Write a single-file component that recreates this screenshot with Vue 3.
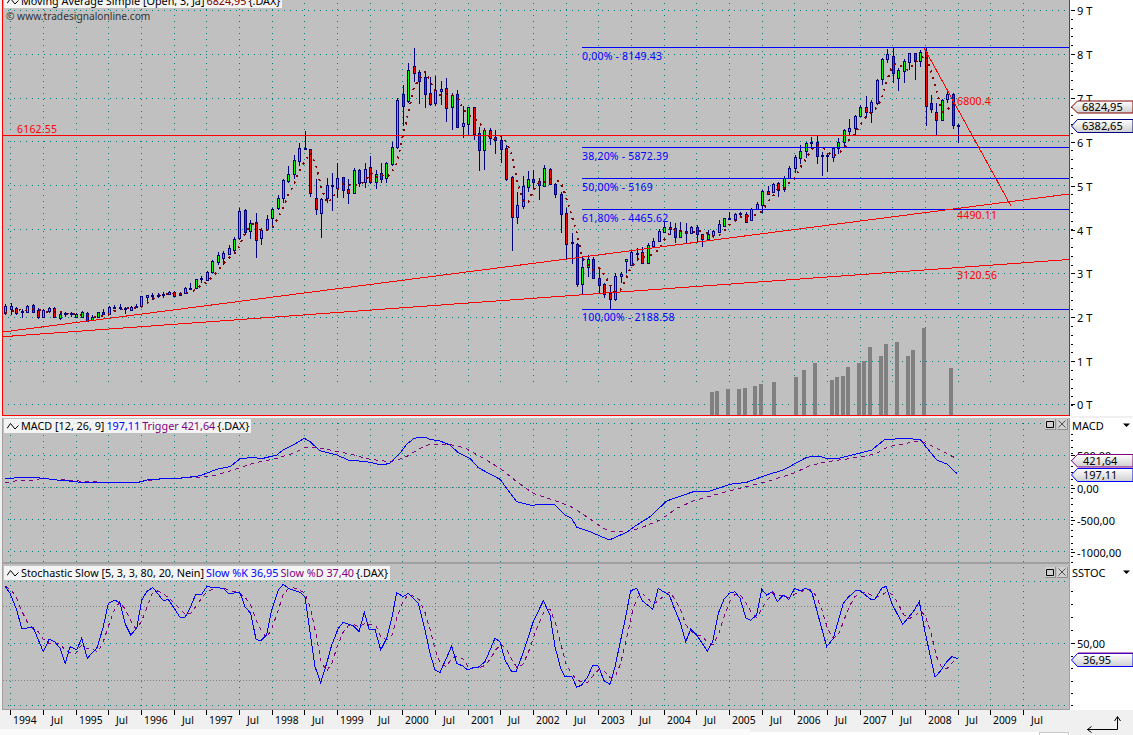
<script setup>
// Candles read as: bodyTop bodyBottom wickTop wickBottom colour (3x crop coordinates)
const early = `558 578 552 585 g|558 568 550 585 g|565 578 562 585 r|573 575 567 593 r|558 575 555 577 g|555 575 552 578 r|571 590 565 598 r|571 590 568 592 g|564 572 560 579 g|565 592 562 595 r|582 593 578 600 g|580 583 575 590 r|580 583 577 592 r|581 590 579 592 g|576 590 573 593 g|578 604 575 606 r|590 601 585 604 g|577 590 576 592 g|577 581 568 584 r|562 581 559 583 g|560 563 555 567 g|560 565 551 570 g|565 567 560 582 r|560 571 558 573 g|557 559 552 562 g|529 557 527 560 g|526 532 524 545 g|524 526 520 540 g|525 527 520 535 r|522 525 517 533 r|517 522 514 524 g|517 527 512 529 r|520 526 516 528 g|505 520 502 523 g|503 505 490 507 g|478 503 476 505 g|475 478 467 490 g|455 481 452 483 g|424 455 420 460 g|405 425 396 435 g|400 415 394 435 g|385 401 375 405 g|358 390 350 395 g|273 355 263 360 g|270 335 267 345 r|308 334 300 357 g|305 361 280 413 r|330 353 325 375 g|298 328 285 330 g|268 293 265 325 g|235 265 226 270 g|181 235 178 248 g|163 184 138 190 g|121 161 105 177 g|85 123 70 137 g|83 85 33 90 g|88 220 88 230 r|235 268 178 285 r|238 280 233 353 g|196 235 175 250 g|196 198 160 272 g|175 203 130 233 g|172 210 170 233 r|208 218 178 252 r|151 220 143 222 g|151 190 148 200 r|148 186 128 203 g|142 185 108 192 r|163 185 150 207 g`
const late = `430 447 400 460 r|400 445 395 458 g|352 402 335 408 g|210 352 205 358 g|193 227 165 288 r|121 213 100 218 g|108 128 55 155 r|127 152 120 222 r|141 191 125 234 r|190 221 142 228 r|180 218 137 227 g|178 184 153 225 g|175 233 145 276 r|195 230 190 300 g|193 290 180 290 r|280 287 228 323 g|232 281 230 315 g|232 312 232 330 r|310 359 290 423 r|300 359 295 420 g|300 325 293 345 r|321 329 300 372 r|331 356 315 400 r|354 446 346 453 r|441 560 437 662 r|526 560 485 582 g|469 527 437 537 g|447 470 422 485 g|448 456 420 475 r|453 465 445 510 r|414 467 405 470 g|418 463 415 465 r|462 493 460 505 r|492 551 487 608 r|550 641 535 690 r|637 640 610 703 g|641 763 640 770 r|712 762 680 795 g|687 712 675 740 g|688 745 680 745 r|745 764 712 790 r|763 792 760 805 r|790 808 765 838 r|739 808 730 812 g|733 737 725 760 g|688 692 688 730 g|665 705 660 708 g|668 671 655 692 g|667 698 650 700 r|645 700 640 703 g|632 648 625 652 g|603 632 598 633 g|591 605 575 607 g|592 598 575 615 r|595 620 580 640 r|600 620 575 622 g|603 610 580 640 r|592 610 587 612 g|590 613 585 635 r|612 628 612 650 r|612 628 600 630 g|604 614 600 625 g|583 605 570 607 g|565 587 563 590 g|563 565 545 570 g|552 567 548 570 g|550 553 545 565 g|553 575 545 580 r|537 571 535 574 g|522 537 515 540 g|483 524 480 550 g|484 491 468 495 r|462 487 460 490 g|460 480 455 500 r|445 478 437 485 g|415 443 407 445 g|380 415 376 430 g|363 383 345 402 g|340 362 335 385 g|335 337 320 357 g|335 377 317 402 r|375 377 365 437 g|375 377 370 425 g|355 380 350 395 g|336 355 325 372 g|300 335 297 350 g|294 302 268 315 g|258 295 255 315 g|232 258 225 262 g|230 245 198 262 r|217 245 210 280 g|150 220 148 225 g|88 148 85 165 g|73 88 57 100 g|78 130 52 158 r|120 143 115 182 g|92 122 88 158 g|70 95 68 120 g|70 92 70 150 r|65 92 60 110 g|66 227 52 287 r|220 238 195 250 r|247 270 220 315 r|211 270 207 273 g|193 208 178 220 g|193 285 190 297 r|285 287 283 338 g`

const barX = (i) => 5.3 + i * 5.445
const parseCandles = (text, offset, first) =>
  text.split('|').map((row, n) => {
    const p = row.split(' ')
    const [top, bot, hi, lo] = p.slice(0, 4).map((v) => Math.round(offset + Number(v) / 3))
    return { x: Math.round(barX(first + n)), top, bot, hi, lo, up: p[4] === 'g' }
  })
const candles = [...parseCandles(early, 120, 0), ...parseCandles(late, 30, 69)]

const maLine = candles
  .map((c, i) => {
    const a = candles.slice(Math.max(0, i - 2), i + 1)
    const v = a.reduce((s, k) => s + (k.up ? k.bot : k.top), 0) / a.length
    return `${c.x},${v.toFixed(1)}`
  })
  .join(' ')

const gridX = Array.from({ length: 32 }, (_, k) => Math.round(10.3 + 32.67 * k) + 0.5)
const timeLabels = gridX.map((x, k) => ({
  x: k % 2 ? x + 7.5 : x + 2.5,
  t: k % 2 ? 'Jul' : String(1994 + k / 2),
}))

const mainRows = [10, 54, 98, 141, 185, 229, 273, 317, 361]
const macdRows = [423, 455, 519, 551]
const stochRows = [581, 643, 705]

const volume = [
  [710, 392], [715, 391], [726, 389], [737, 389], [743, 388], [753, 386], [759, 384], [772, 382],
  [794, 377], [802, 370], [813, 363], [830, 380], [835, 377], [841, 376], [846, 367], [857, 363],
  [862, 361], [868, 347], [879, 356], [884, 344], [895, 342], [906, 356], [911, 350], [922, 328], [949, 368],
]

const levels = [
  { y: 47, x: 582, t: '0,00% - 8149.43', ty: 60 },
  { y: 147, x: 582, t: '38,20% - 5872.39', ty: 160 },
  { y: 178, x: 582, t: '50,00% - 5169', ty: 191 },
  { y: 209, x: 582, t: '61,80% - 4465.62', ty: 222 },
  { y: 309, x: 582, t: '100,00% - 2188.58', ty: 321 },
]
const redLabels = [
  { x: 17, y: 133, t: '6162.55' },
  { x: 957, y: 105, t: '6800.4' },
  { x: 957, y: 219, t: '4490.11' },
  { x: 957, y: 279, t: '3120.56' },
]

const pts = (text, ox, oy) =>
  text.split(' ').map((p) => {
    const [a, b] = p.split(',').map(Number)
    return [ox + a / 3, oy + b / 3]
  })
const toStr = (a) => a.map((p) => `${p[0].toFixed(1)},${p[1].toFixed(1)}`).join(' ')

const macdLine = toStr([
  ...pts('15,207 50,203 100,202 130,205 170,210 200,212 260,219 330,218 415,217 450,208 540,205 600,197 650,178 690,170 720,146 750,143 790,145 830,135 850,120 880,105 913,85 930,95 960,122 1010,135 1045,150 1100,155 1145,165 1170,160 1195,135', 0, 410),
  ...pts('0,85 20,58 40,42 55,37 75,37 90,43 120,48 150,60 175,83 210,100 235,128 270,147 300,163 350,230 395,241 430,238 465,240 495,270 515,280 530,307 570,320 628,345 680,322 700,307 750,275 800,228 880,200 930,198 990,178 1040,172 1100,150 1150,135 1220,97 1255,93 1275,99 1320,99 1380,84', 400, 425),
  ...pts('35,150 75,118 135,116 180,118 230,180 260,192 290,220', 860, 400),
])
const macdTrigger = toStr([
  ...pts('15,218 50,212 100,210 130,205 200,210 260,215 330,217 415,217 500,205 590,203 650,195 700,180 760,160 830,145 880,130 915,113 945,112 1000,122 1050,132 1110,148 1170,155 1195,150', 0, 410),
  ...pts('0,102 30,90 50,75 85,60 105,58 140,58 170,62 200,72 250,100 300,130 350,170 400,205 450,222 510,243 560,275 610,310 640,320 680,320 720,310 780,285 830,250 880,228 950,208 1030,187 1100,170 1180,145 1230,122 1280,110 1340,102 1400,92', 400, 425),
  ...pts('50,160 85,140 140,130 180,122 225,142 290,176', 860, 400),
])

const stochK = [
  ...pts('15,78 30,100 50,150 65,205 100,203 130,275 147,238 165,245 180,265 196,310 210,260 230,270 245,235 262,295 292,262 310,200 325,130 345,120 360,130 375,190 392,225 410,205 425,120 440,95 458,82 490,122 505,118 540,172 555,172 570,145 587,103 605,103 620,80 670,85 685,100 720,98 735,140 752,160 768,238 782,242 800,225 815,150 835,90 850,73 865,85 900,97 915,110 945,320 962,368 980,310 995,255 1015,205 1030,187 1060,197 1077,215 1093,157 1108,210 1125,208 1142,270 1160,235 1175,175 1190,98 1210,110 1225,100 1255,130 1275,210 1290,280 1305,330 1320,338 1355,258 1370,310 1388,318 1403,330 1420,323 1435,322 1455,305 1485,235', 0, 560),
  ...pts('0,245 15,300 35,335 48,335 65,290 100,185 130,122 150,165 165,260 182,325 195,350 215,348 230,382 245,375 262,352 278,317 295,318 312,362 330,373 345,320 360,250 375,180 392,92 410,85 427,122 458,148 475,85 490,95 508,105 525,150 540,185 557,245 572,208 590,225 622,273 638,245 655,160 672,118 688,100 705,95 720,115 738,175 752,181 770,165 785,88 800,105 818,95 832,125 850,105 866,118 884,85 900,92 917,85 935,95 980,260 1000,235 1030,130 1045,112 1065,93 1080,92 1115,120 1125,118 1145,85 1158,79 1175,130 1208,193 1240,155 1258,125 1275,215 1305,352 1322,332 1340,305 1355,290 1373,296', 500, 560),
]
const kAt = (x) => {
  for (let i = 1; i < stochK.length; i++) {
    const [x0, y0] = stochK[i - 1]
    const [x1, y1] = stochK[i]
    if (x <= x1) return y0 + ((y1 - y0) * (x - x0)) / (x1 - x0 || 1)
  }
  return stochK[stochK.length - 1][1]
}
const stochD = []
for (let i = 0; i <= 175; i++) {
  const x = barX(i)
  const a = [0, 1, 2].map((n) => kAt(Math.max(5.3, barX(Math.max(0, i - n)))))
  stochD.push([x, (a[0] + a[1] + a[2]) / 3])
}
const stochKLine = toStr(stochK)
const stochDLine = toStr(stochD)

const tagPoints = (y, h) => `1071.5,${y + h / 2} 1077.5,${y} 1133,${y} 1133,${y + h} 1077.5,${y + h}`

const mainAxis = ['9 T', '8 T', '7 T', '6 T', '5 T', '4 T', '3 T', '2 T', '1 T', '0 T'].map((t, i) => ({
  t,
  y: [10, 54, 98, 142, 186, 230, 273, 317, 361, 404][i],
}))
const mainMinor = Array.from({ length: 46 }, (_, i) => 10 + i * 8.78)
const macdAxis = [
  { t: '500,00', y: 455 },
  { t: '0,00', y: 488 },
  { t: '-500,00', y: 520 },
  { t: '-1000,00', y: 552 },
]
const macdMinor = Array.from({ length: 23 }, (_, i) => 434 + i * 6.4)
const stochMinor = [591, 604, 617, 630, 656, 668, 681, 693, 705]
</script>

<template>
  <div class="app">
    <div class="row main-row">
      <div class="plot plot-main">
        <svg class="chart" width="1066" height="415" viewBox="3 0 1066 415">
          <g class="grid">
            <line v-for="y in mainRows" :key="y" x1="2" x2="1069" :y1="y + 0.5" :y2="y + 0.5" />
            <line v-for="x in gridX" :key="x" :x1="x" :x2="x" y1="3" y2="384" />
            <line x1="2" x2="957" y1="404.5" y2="404.5" stroke-dasharray="1 5 1 5 1 47" />
            <line x1="962" x2="1069" y1="404.5" y2="404.5" />
          </g>
          <rect v-for="v in volume" :key="v[0]" class="vol" :x="v[0]" :y="v[1]" width="4" :height="415 - v[1]" />
          <g v-for="(c, i) in candles" :key="i">
            <line class="wick" :x1="c.x + 0.5" :x2="c.x + 0.5" :y1="c.hi" :y2="c.lo" />
            <rect
              class="body"
              :class="c.up ? 'up' : 'down'"
              :x="c.x - 0.5"
              :y="c.top + 0.5"
              width="2"
              :height="Math.max(1, c.bot - c.top)"
            />
          </g>
          <polyline class="ma" :points="maLine" />
          <line class="red-h" x1="3" x2="1069" y1="135.5" y2="135.5" />
          <line v-for="l in levels" :key="l.y" class="blue-h" :x1="l.x" x2="1069" :y1="l.y + 0.5" :y2="l.y + 0.5" />
          <line class="red-h" x1="3" y1="332" x2="1069" y2="194" />
          <line class="red-h" x1="3" y1="336.7" x2="1069" y2="259.5" />
          <line class="red-fall" x1="924.3" y1="48.3" x2="1010.7" y2="205.5" />
          <text v-for="l in levels" :key="l.t" class="lbl blue" :x="l.x" :y="l.ty">{{ l.t }}</text>
          <text v-for="l in redLabels" :key="l.t" class="lbl red" :x="l.x" :y="l.y">{{ l.t }}</text>
        </svg>
        <div class="title title-main">
          <svg class="wave" width="12" height="8" viewBox="0 0 12 8"><path d="M0 6.5 3.5 1.5 8 7 11.5 3.5" /></svg>
          <span>Moving Average Simple [Open, 3, Ja]</span>
          <span class="c-darkred">6824,95</span>
          <span>{.DAX}</span>
        </div>
        <div class="copyright">© www.tradesignalonline.com</div>
      </div>
      <svg class="axis" width="63" height="416" viewBox="1070 0 63 416">
        <defs>
          <linearGradient id="tagMain" x1="0" x2="0" y1="0" y2="1">
            <stop offset="0" stop-color="#ffffff" />
            <stop offset="1" stop-color="#cfcfcf" />
          </linearGradient>
        </defs>
        <line v-for="y in mainMinor" :key="y" class="tick" x1="1071" x2="1073" :y1="Math.round(y) + 0.5" :y2="Math.round(y) + 0.5" />
        <g v-for="a in mainAxis" :key="a.t">
          <line class="tick" x1="1071" x2="1075" :y1="a.y + 0.5" :y2="a.y + 0.5" />
          <text class="axis-text" x="1077" :y="a.y + 4.5">{{ a.t }}</text>
        </g>
        <polygon :points="tagPoints(101, 12)" fill="url(#tagMain)" stroke="#800000" />
        <text class="axis-text" x="1082" y="111">6824,95</text>
        <polygon :points="tagPoints(119.5, 13)" fill="url(#tagMain)" stroke="#000080" />
        <text class="axis-text" x="1082" y="130">6382,65</text>
      </svg>
    </div>

    <div class="row macd-row">
      <div class="plot plot-sub">
        <svg class="chart" width="1066" height="144" viewBox="3 418 1066 144">
          <g class="grid">
            <line v-for="y in macdRows" :key="y" x1="2" x2="1069" :y1="y + 0.5" :y2="y + 0.5" />
            <line x1="2" x2="1069" y1="487.5" y2="487.5" />
            <line v-for="x in gridX" :key="x" :x1="x" :x2="x" y1="423" y2="562" />
          </g>
          <line class="zero" x1="3" x2="957" y1="487.5" y2="487.5" />
          <polyline class="sig" :points="macdTrigger" />
          <polyline class="line" :points="macdLine" />
        </svg>
        <div class="title title-macd">
          <svg class="wave" width="12" height="8" viewBox="0 0 12 8"><path d="M0 6.5 3.5 1.5 8 7 11.5 3.5" /></svg>
          <span>MACD [12, 26, 9]</span>
          <span class="c-blue">197,11</span>
          <span class="c-purple">Trigger 421,64</span>
          <span>{.DAX}</span>
        </div>
        <div class="btns">
          <span class="btn"><svg width="8" height="8" viewBox="0 0 8 8"><path class="max" d="M.5 1.5h7v6h-7z" /></svg></span>
          <span class="btn"><svg width="8" height="8" viewBox="0 0 8 8"><path class="cls" d="M.5.5l7 7M7.5.5l-7 7" /></svg></span>
        </div>
      </div>
      <svg class="axis" width="63" height="146" viewBox="1070 418 63 146">
        <defs>
          <linearGradient id="tagMacd" x1="0" x2="0" y1="0" y2="1">
            <stop offset="0" stop-color="#ffffff" />
            <stop offset="1" stop-color="#cfcfcf" />
          </linearGradient>
        </defs>
        <text class="axis-text" x="1072" y="429.5">MACD</text>
        <polygon class="tri" points="1123,423.5 1130,423.5 1126.5,427" />
        <line v-for="y in macdMinor" :key="y" class="tick" x1="1071" x2="1073" :y1="Math.round(y) + 0.5" :y2="Math.round(y) + 0.5" />
        <g v-for="a in macdAxis" :key="a.t">
          <line class="tick" x1="1071" x2="1075" :y1="a.y + 0.5" :y2="a.y + 0.5" />
          <text class="axis-text" x="1077" :y="a.y + 4.5">{{ a.t }}</text>
        </g>
        <polygon :points="tagPoints(454.5, 12.5)" fill="url(#tagMacd)" stroke="#800080" />
        <text class="axis-text" x="1083" y="465">421,64</text>
        <polygon :points="tagPoints(468.5, 13)" fill="url(#tagMacd)" stroke="#0000ff" />
        <text class="axis-text" x="1083" y="479">197,11</text>
      </svg>
    </div>

    <div class="row stoch-row">
      <div class="plot plot-last">
        <svg class="chart" width="1066" height="145" viewBox="3 564 1066 145">
          <g class="grid">
            <line v-for="y in stochRows" :key="y" x1="2" x2="1069" :y1="y + 0.5" :y2="y + 0.5" />
            <line v-for="x in gridX" :key="x" :x1="x" :x2="x" y1="567" y2="709" />
          </g>
          <line class="zero" x1="3" x2="957" y1="606.5" y2="606.5" />
          <line class="zero" x1="3" x2="957" y1="680.5" y2="680.5" />
          <polyline class="sig" :points="stochDLine" />
          <polyline class="line" :points="stochKLine" />
        </svg>
        <div class="title title-stoch">
          <svg class="wave" width="12" height="8" viewBox="0 0 12 8"><path d="M0 6.5 3.5 1.5 8 7 11.5 3.5" /></svg>
          <span>Stochastic Slow [5, 3, 3, 80, 20, Nein]</span>
          <span class="c-blue">Slow %K 36,95</span>
          <span class="c-purple">Slow %D 37,40</span>
          <span>{.DAX}</span>
        </div>
        <div class="btns">
          <span class="btn"><svg width="8" height="8" viewBox="0 0 8 8"><path class="max" d="M.5 1.5h7v6h-7z" /></svg></span>
          <span class="btn"><svg width="8" height="8" viewBox="0 0 8 8"><path class="cls" d="M.5.5l7 7M7.5.5l-7 7" /></svg></span>
        </div>
      </div>
      <svg class="axis" width="63" height="146" viewBox="1070 564 63 146">
        <text class="axis-text" x="1072" y="577">SSTOC</text>
        <polygon class="tri" points="1123,570.5 1130,570.5 1126.5,574" />
        <line v-for="y in stochMinor" :key="y" class="tick" x1="1071" x2="1073" :y1="y + 0.5" :y2="y + 0.5" />
        <line class="tick" x1="1071" x2="1075" y1="643.5" y2="643.5" />
        <text class="axis-text" x="1077" y="648">50,00</text>
        <defs>
          <linearGradient id="tagStoch" x1="0" x2="0" y1="0" y2="1">
            <stop offset="0" stop-color="#ffffff" />
            <stop offset="1" stop-color="#cfcfcf" />
          </linearGradient>
        </defs>
        <polygon :points="tagPoints(653.5, 13)" fill="url(#tagStoch)" stroke="#0000ff" />
        <line x1="1078" x2="1133" y1="653" y2="653" stroke="#800080" />
        <text class="axis-text" x="1083" y="664">36,95</text>
      </svg>
    </div>

    <div class="row bottom-row">
      <div class="bottom-left">
        <svg class="time" width="1070" height="19" viewBox="0 710 1070 19">
          <line v-for="x in gridX" :key="x" class="tick" :x1="x" :x2="x" y1="710" y2="715" />
          <text v-for="l in timeLabels" :key="l.x" class="time-text" :x="l.x" y="724">{{ l.t }}</text>
        </svg>
        <div class="footer">
          <div class="footer-pale"></div>
          <div class="footer-white"><div class="footer-box"></div></div>
        </div>
      </div>
      <svg class="corner" width="63" height="25" viewBox="1070 710 63 25">
        <path class="arrow" d="M1087 729.5H1117.5V717M1091.5 726.5 1087.5 729.5 1091.5 732.5M1114.5 721 1117.5 716.5 1120.5 721" />
      </svg>
    </div>
  </div>
</template>

<style>
html, body { margin: 0; padding: 0; background: #f0f0f0; }
</style>

<style scoped>
.app {
  width: 1133px;
  height: 735px;
  overflow: hidden;
  display: flex;
  flex-direction: column;
  background: #f0f0f0;
  font-family: "Noto Sans", "Liberation Sans", sans-serif;
  font-size: 11px;
  color: #000;
}
.row { display: flex; }
.main-row { height: 416px; margin-bottom: 2px; }
.macd-row { height: 146px; }
.stoch-row { height: 146px; }
.bottom-row { height: 25px; }
.plot {
  position: relative;
  flex: 0 0 auto;
  margin-left: 2px;
  width: 1066px;
  background: #c0c0c0;
}
.plot-main { border: 1px solid #ff0000; border-top: 0; }
.plot-sub { border: 1px solid #a0a0a0; border-width: 0 1px 2px; }
.plot-last { border: 1px solid #a0a0a0; border-width: 0 1px 1px; }
.chart, .axis, .time, .corner { display: block; }
.axis { background: #fff; flex: 0 0 auto; }
.grid line { stroke: #008080; stroke-width: 1; stroke-dasharray: 1 5; shape-rendering: crispEdges; }
.vol { fill: #808080; shape-rendering: crispEdges; }
.wick { stroke: #000080; stroke-width: 1; shape-rendering: crispEdges; }
.body { stroke: #000080; stroke-width: 1; shape-rendering: crispEdges; }
.up { fill: #00ff00; }
.down { fill: #ff0000; }
.ma { fill: none; stroke: #800000; stroke-width: 2; stroke-dasharray: 2 5; shape-rendering: crispEdges; }
.red-h { stroke: #ff0000; stroke-width: 1; shape-rendering: crispEdges; }
.blue-h { stroke: #0000ff; stroke-width: 1; shape-rendering: crispEdges; }
.red-fall { stroke: #ff0000; stroke-width: 1; shape-rendering: crispEdges; }
.lbl { font-size: 10.5px; letter-spacing: 0.2px; }
.blue { fill: #0000ff; }
.red { fill: #ff0000; }
.zero { stroke: #808080; stroke-width: 1; stroke-dasharray: 1 2; shape-rendering: crispEdges; }
.line { fill: none; stroke: #0000ff; stroke-width: 1; shape-rendering: crispEdges; }
.sig { fill: none; stroke: #800080; stroke-width: 1; stroke-dasharray: 4 4; shape-rendering: crispEdges; }
.tick { stroke: #000; stroke-width: 1; shape-rendering: crispEdges; }
.axis-text { font-size: 11px; fill: #000; }
.time-text { font-size: 10.3px; fill: #000; }
.tri { fill: #000; }
.title {
  position: absolute;
  left: 1px;
  display: flex;
  align-items: center;
  gap: 2px;
  height: 14px;
  padding: 0 2px 0 3px;
  background: rgba(255, 255, 255, 0.82);
  white-space: nowrap;
  font-size: 10.8px;
  line-height: 14px;
}
.title-main { top: -6px; }
.title-macd { top: 1px; }
.title-stoch { top: 2px; }
.wave { flex: 0 0 auto; }
.wave path { fill: none; stroke: #000; stroke-width: 1; }
.c-darkred { color: #800000; }
.c-blue { color: #0000ff; }
.c-purple { color: #800080; }
.copyright {
  position: absolute;
  left: 3px;
  top: 9px;
  font-size: 10.2px;
  line-height: 14px;
  color: #333;
  white-space: nowrap;
}
.btns {
  position: absolute;
  right: 1px;
  top: 1px;
  display: flex;
  gap: 1px;
}
.plot-last .btns { top: 3px; }
.btn {
  display: flex;
  align-items: center;
  justify-content: center;
  width: 10px;
  height: 10px;
  background: #d0d0d0;
  border-right: 1px solid #909090;
  border-bottom: 1px solid #909090;
}
.max { fill: none; stroke: #000; stroke-width: 1; }
.cls { fill: none; stroke: #505050; stroke-width: 1; }
.bottom-left { flex: 0 0 1070px; display: flex; flex-direction: column; }
.footer { flex: 1; display: flex; }
.footer-pale { flex: 0 0 750px; background: #fafafa; }
.footer-white { flex: 1; background: #fff; margin-top: 3px; display: flex; justify-content: flex-end; }
.footer-box { width: 28px; margin: 0 1px 0 0; border: 1px solid #c8c8c8; border-bottom: 0; }
.arrow { fill: none; stroke: #000; stroke-width: 1; }
</style>
